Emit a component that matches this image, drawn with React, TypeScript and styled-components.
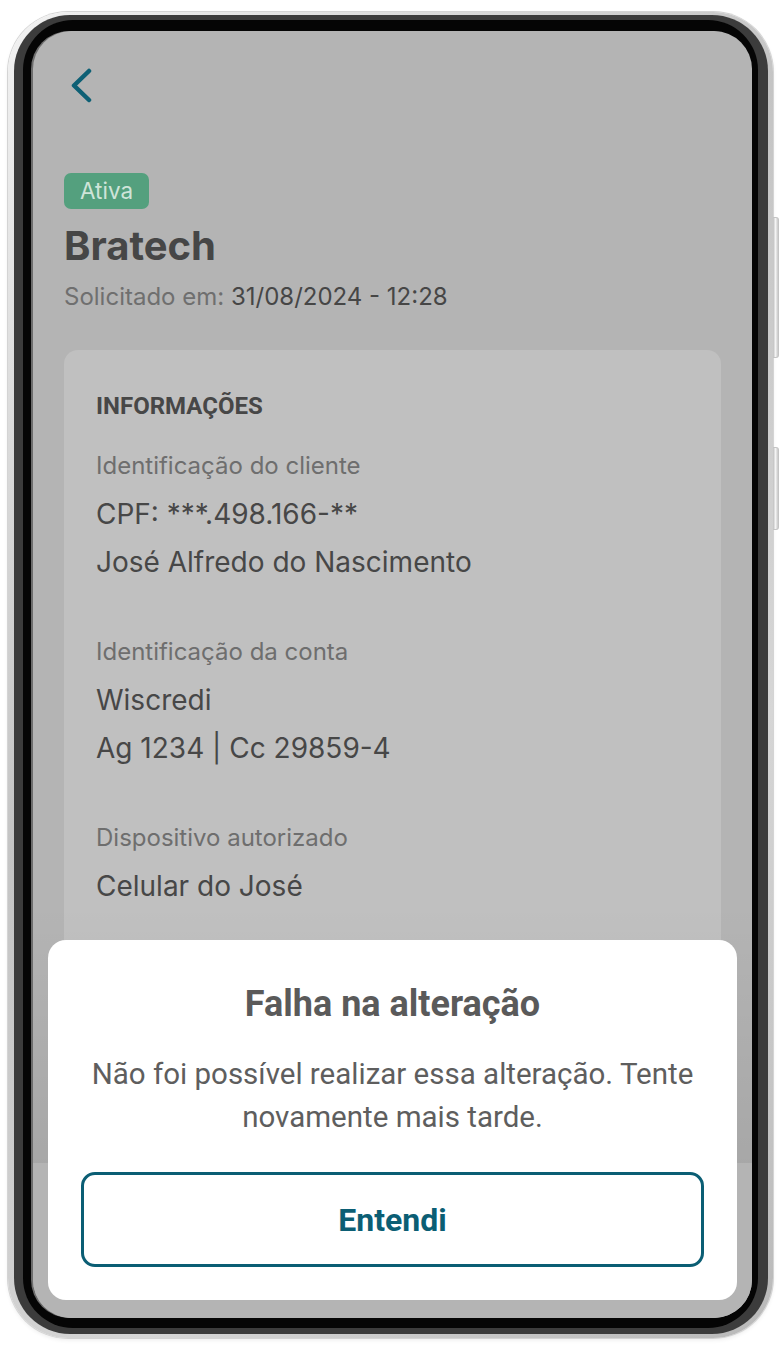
import * as React from "react";
import styled, { createGlobalStyle } from "styled-components";

const GlobalStyle = createGlobalStyle`
  html, body {
    margin: 0;
    padding: 0;
    background: #ffffff;
  }
  * {
    box-sizing: border-box;
  }
`;

const info = [
  {
    label: "Identificação do cliente",
    values: ["CPF: ***.498.166-**", "José Alfredo do Nascimento"],
  },
  { label: "Identificação da conta", values: ["Wiscredi", "Ag 1234 | Cc 29859-4"] },
  { label: "Dispositivo autorizado", values: ["Celular do José"] },
];

const App: React.FC = () => {
  return (
    <>
      <GlobalStyle />
      <Page>
        <Phone>
          <SideKey $top={205} $height={141} />
          <SideKey $top={435} $height={83} />
          <DarkRing>
            <BlackRing>
              <Screen>
                <Content>
                  <BackButton aria-label='Voltar'>
                    <svg width='24' height='36' viewBox='0 0 24 36' fill='none'>
                      <path
                        d='M19 3L4 17.5L19 32'
                        stroke='currentColor'
                        strokeWidth='4.5'
                        strokeLinecap='round'
                        strokeLinejoin='round'
                      />
                    </svg>
                  </BackButton>
                  <Badge>Ativa</Badge>
                  <Title>Bratech</Title>
                  <Requested>
                    Solicitado em: <strong>31/08/2024 - 12:28</strong>
                  </Requested>
                  <InfoCard>
                    <CardHeading>INFORMAÇÕES</CardHeading>
                    {info.map((group) => (
                      <Group key={group.label}>
                        <Label>{group.label}</Label>
                        {group.values.map((v) => (
                          <Value key={v}>{v}</Value>
                        ))}
                      </Group>
                    ))}
                  </InfoCard>
                </Content>
                <Footer />
                <Sheet>
                  <SheetTitle>Falha na alteração</SheetTitle>
                  <SheetText>
                    Não foi possível realizar essa alteração. Tente novamente mais tarde.
                  </SheetText>
                  <OutlineButton>Entendi</OutlineButton>
                </Sheet>
              </Screen>
            </BlackRing>
          </DarkRing>
        </Phone>
      </Page>
    </>
  );
};

export default App;

const Page = styled.div`
  width: 784px;
  height: 1356px;
  padding: 12px 0 0 8px;
`;

const Phone = styled.div`
  position: relative;
  width: 765px;
  height: 1326px;
  padding: 3px 5px 4px 6px;
  border-radius: 60px;
  background: linear-gradient(135deg, #f2f2f2 0%, #c4c4c4 40%, #d6d6d6 70%, #b9b9b9 100%);
  box-shadow: 0 0 0 1px #d4d4d4, 0 2px 4px rgba(0, 0, 0, 0.08);
`;

const SideKey = styled.div<{ $top: number; $height: number }>`
  position: absolute;
  right: -6px;
  top: ${(p) => p.$top}px;
  width: 6px;
  height: ${(p) => p.$height}px;
  border-radius: 0 3px 3px 0;
  background: linear-gradient(90deg, #bdbdbd, #f4f4f4 50%, #c8c8c8);
  border: 1px solid #c4c4c4;
  border-left: none;
`;

const DarkRing = styled.div`
  height: 100%;
  padding: 5px 10px 6px 9px;
  border-radius: 56px;
  background: #3c3c3c;
`;

const BlackRing = styled.div`
  height: 100%;
  padding: 11px 6px 10px 10px;
  border-radius: 50px;
  background: #050505;
`;

const Screen = styled.div`
  position: relative;
  height: 100%;
  overflow: hidden;
  border-radius: 38px;
  background: #b4b4b4;
  box-shadow: -2px 0 0 #6d6d6d;
`;

const Content = styled.div`
  display: flex;
  flex-direction: column;
  align-items: flex-start;
  padding: 37px 31px 0 31px;
  font-family: Inter, "Liberation Sans", sans-serif;
  color: #474747;
`;

const BackButton = styled.button`
  display: flex;
  align-items: center;
  justify-content: center;
  margin-left: 6px;
  padding: 0;
  border: none;
  background: none;
  color: #0e6075;
`;

const Badge = styled.span`
  margin-top: 69px;
  height: 36px;
  padding: 0 16px;
  border-radius: 7px;
  background: #54a07e;
  color: #cfe4d9;
  font-size: 22.5px;
  line-height: 36px;
`;

const Title = styled.h1`
  margin: 14px 0 0;
  font-size: 40px;
  line-height: 46px;
  font-weight: 700;
  color: #464646;
`;

const Requested = styled.p`
  margin: 14px 0 0;
  font-size: 24px;
  line-height: 28px;
  color: #6f6f6f;

  strong {
    font-weight: 400;
    color: #464646;
  }
`;

const InfoCard = styled.section`
  align-self: stretch;
  margin-top: 39px;
  min-height: 900px;
  padding: 42px 32px;
  border-radius: 14px;
  background: #c0c0c0;
`;

const CardHeading = styled.h2`
  margin: 0 0 32px;
  font-family: Roboto, "Liberation Sans", sans-serif;
  font-size: 24px;
  line-height: 28px;
  font-weight: 700;
  color: #474747;
`;

const Group = styled.div`
  display: flex;
  flex-direction: column;
  margin-bottom: 52px;
`;

const Label = styled.span`
  margin-bottom: 10px;
  font-size: 24px;
  line-height: 28px;
  color: #6e6e6e;
`;

const Value = styled.span`
  font-size: 28px;
  line-height: 48px;
  color: #474747;
`;

const Footer = styled.div`
  position: absolute;
  left: 0;
  right: 0;
  bottom: 0;
  height: 155px;
  background: #b4b4b4;

  &::before {
    content: "";
    position: absolute;
    left: 0;
    right: 0;
    bottom: 100%;
    height: 260px;
    background: linear-gradient(180deg, rgba(0, 0, 0, 0) 0%, rgba(0, 0, 0, 0.07) 100%);
  }
`;

const Sheet = styled.div`
  position: absolute;
  left: 15px;
  right: 15px;
  bottom: 18px;
  display: flex;
  flex-direction: column;
  align-items: center;
  padding: 44px 33px 33px;
  border-radius: 18px;
  background: #ffffff;
  font-family: Roboto, "Liberation Sans", sans-serif;
`;

const SheetTitle = styled.h3`
  margin: 0;
  font-size: 36px;
  line-height: 40px;
  font-weight: 700;
  color: #5a5a5a;
`;

const SheetText = styled.p`
  margin: 29px 0 0;
  max-width: 640px;
  font-size: 29.5px;
  line-height: 43px;
  text-align: center;
  color: #5e5e5e;
`;

const OutlineButton = styled.button`
  align-self: stretch;
  margin-top: 33px;
  height: 95px;
  border: 3px solid #0b5e74;
  border-radius: 14px;
  background: #ffffff;
  color: #0b5e74;
  font-family: Roboto, "Liberation Sans", sans-serif;
  font-size: 32px;
  font-weight: 700;
`;
